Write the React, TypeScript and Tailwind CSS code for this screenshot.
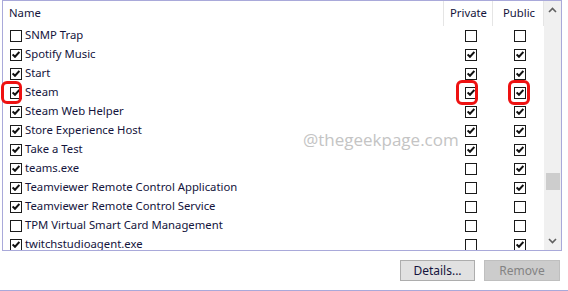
import React from 'react';

type Row = { name: string; checked: boolean; priv: boolean; pub: boolean };

const rows: Row[] = [
  { name: 'SNMP Trap', checked: false, priv: false, pub: false },
  { name: 'Spotify Music', checked: true, priv: true, pub: true },
  { name: 'Start', checked: true, priv: true, pub: true },
  { name: 'Steam', checked: true, priv: true, pub: true },
  { name: 'Steam Web Helper', checked: true, priv: true, pub: true },
  { name: 'Store Experience Host', checked: true, priv: true, pub: true },
  { name: 'Take a Test', checked: true, priv: true, pub: true },
  { name: 'teams.exe', checked: true, priv: false, pub: true },
  { name: 'Teamviewer Remote Control Application', checked: true, priv: false, pub: true },
  { name: 'Teamviewer Remote Control Service', checked: true, priv: false, pub: false },
  { name: 'TPM Virtual Smart Card Management', checked: false, priv: false, pub: false },
  { name: 'twitchstudioagent.exe', checked: true, priv: false, pub: true },
];

const Check: React.FC<{ on: boolean }> = ({ on }) => (
  <span className="flex h-[12px] w-[12px] shrink-0 items-center justify-center border border-[#1a1a1a] bg-white">
    {on && (
      <svg width="8" height="7" viewBox="0 0 8 7">
        <path d="M0.6 3.4 L3 5.8 L7.4 1" fill="none" stroke="#111" strokeWidth="2" />
      </svg>
    )}
  </span>
);

const Highlight: React.FC<{ className: string }> = ({ className }) => (
  <div className={`pointer-events-none absolute rounded-[6px] border-[3px] border-[#ee1111] ${className}`} />
);

export default function App() {
  return (
    <div className="relative h-[291px] w-[568px] overflow-hidden bg-white text-[11.3px] text-[#14143c] [font-family:'Noto_Sans',sans-serif]">
      <div className="ml-[2px] flex h-[251px] w-[560px] border border-[#a9a9da] bg-white">
        <div className="flex flex-1 flex-col overflow-hidden">
          <div className="flex h-[25px] shrink-0 items-center">
            <div className="flex-1 pl-[6px]">Name</div>
            <div className="h-full w-px bg-[#e5e5e5]" />
            <div className="w-[48px] pl-[6px]">Private</div>
            <div className="h-full w-px bg-[#e5e5e5]" />
            <div className="w-[50px] pl-[10px]">Public</div>
            <div className="h-full w-px bg-[#e5e5e5]" />
          </div>
          {rows.map((r) => (
            <div key={r.name} className="flex h-[19px] shrink-0 items-center">
              <div className="flex flex-1 items-center gap-[3px] pl-[7px]">
                <Check on={r.checked} />
                <span className="whitespace-nowrap">{r.name}</span>
              </div>
              <div className="flex w-[49px] justify-center pl-[4px]">
                <Check on={r.priv} />
              </div>
              <div className="flex w-[51px] justify-center pl-[3px]">
                <Check on={r.pub} />
              </div>
            </div>
          ))}
        </div>
        <div className="relative flex w-[17px] flex-col items-center justify-between bg-[#f0f0f0] py-[6px]">
          <svg width="9" height="6" viewBox="0 0 9 6">
            <path d="M1 5 L4.5 1.5 L8 5" fill="none" stroke="#606060" strokeWidth="1.6" />
          </svg>
          <div className="absolute left-[2px] top-[172px] h-[17px] w-[14px] bg-[#cdcdcd]" />
          <svg width="9" height="6" viewBox="0 0 9 6">
            <path d="M1 1 L4.5 4.5 L8 1" fill="none" stroke="#606060" strokeWidth="1.6" />
          </svg>
        </div>
      </div>

      <div className="flex h-[39px] items-center justify-end gap-[9px] pr-[8px]">
        <button className="h-[21px] w-[75px] border border-[#adadad] bg-[#e1e1e1] text-[12px] text-[#14143c]">
          Details...
        </button>
        <button className="h-[21px] w-[76px] border border-[#bfbfbf] bg-[#cccccc] text-[12px] text-[#838383]">
          Remove
        </button>
      </div>
      <div className="h-px w-full bg-[#a9a9da]" />

      <div className="pointer-events-none absolute left-[303px] top-[127px] text-[17px] text-[#c4c4c4] [font-family:'Open_Sans',sans-serif]">
        @thegeekpage.com
      </div>

      <Highlight className="left-[1px] top-[81px] h-[23px] w-[21px]" />
      <Highlight className="left-[456px] top-[80px] h-[25px] w-[22px]" />
      <Highlight className="left-[508px] top-[80px] h-[25px] w-[22px]" />
    </div>
  );
}
